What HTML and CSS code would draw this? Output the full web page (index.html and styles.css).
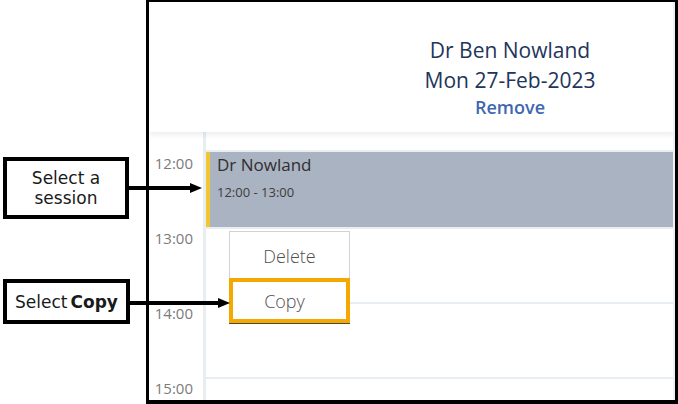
FILE: index.html
```html
<!DOCTYPE html>
<html lang="en">
<head>
  <meta charset="UTF-8" />
  <meta name="viewport" content="width=device-width, initial-scale=1.0" />
  <title>Session menu</title>
  <link rel="stylesheet" href="styles.css">
</head>
<body>
  <div class="stage">
    <div class="frame">
      <div class="head">
        <div class="head-gutter"></div>
        <div class="head-col">
          <div class="who">Dr Ben Nowland</div>
          <div class="who">Mon 27-Feb-2023</div>
          <a class="remove" href="#">Remove</a>
        </div>
      </div>

      <div class="grid">
        <div class="row row-lead">
          <div class="time"></div>
          <div class="day"></div>
        </div>
        <div class="row row-first">
          <div class="time">12:00</div>
          <div class="day">
            <div class="session">
              <div class="session-name">Dr Nowland</div>
              <div class="session-time">12:00 - 13:00</div>
            </div>
          </div>
        </div>
        <div class="row">
          <div class="time">13:00</div>
          <div class="day"></div>
        </div>
        <div class="row">
          <div class="time">14:00</div>
          <div class="day"></div>
        </div>
        <div class="row row-last">
          <div class="time">15:00</div>
          <div class="day"></div>
        </div>

        <div class="menu">
          <div class="menu-item">Delete</div>
          <div class="menu-item menu-item-hot">Copy</div>
        </div>
      </div>
    </div>

    <!-- annotations -->
    <div class="note note-session">Select a<br>session</div>
    <svg class="arrow arrow-session" width="74" height="16" viewBox="0 0 74 16">
      <line x1="0" y1="8" x2="62" y2="8" stroke="#000" stroke-width="4" />
      <polygon points="61,3 73,8 61,13" fill="#000" />
    </svg>

    <div class="note note-copy">Select <b>Copy</b></div>
    <svg class="arrow arrow-copy" width="101" height="16" viewBox="0 0 101 16">
      <line x1="0" y1="8" x2="89" y2="8" stroke="#000" stroke-width="4" />
      <polygon points="88,3 100,8 88,13" fill="#000" />
    </svg>
  </div>
</body>
</html>
```

FILE: styles.css
```css
body {
  margin: 0;
  background: #fff;
  font-family: 'Open Sans', sans-serif;
  overflow: hidden;
}

.stage {
  position: relative;
  width: 678px;
  height: 404px;
  padding-left: 146px;
  box-sizing: border-box;
}

.frame {
  height: 404px;
  box-sizing: border-box;
  border-style: solid;
  border-color: #000;
  border-width: 2px 3px 4px 3px;
  overflow: hidden;
  background: #fff;
  position: relative;
}

/* thin grey edge just inside the right border */
.frame::after {
  content: "";
  position: absolute;
  top: 0;
  right: 0;
  bottom: 0;
  width: 2px;
  background: #eef0f2;
  z-index: 2;
}

/* header */
.head {
  position: relative;
  z-index: 1;
  display: flex;
  height: 130px;
  background: #fff;
  box-shadow: 0 3px 5px rgba(0, 0, 0, 0.07);
}

.head-gutter {
  flex: 0 0 57px;
}

.head-col {
  flex: 0 0 608px;
  padding-top: 33px;
  text-align: center;
  color: #22355a;
}

.who {
  font-size: 21px;
  line-height: 30px;
}

.remove {
  display: block;
  font-size: 18px;
  line-height: 25px;
  font-weight: 600;
  color: #4066b3;
  text-decoration: none;
}

/* day grid */
.grid {
  position: relative;
}

.row {
  display: flex;
  height: 75px;
}

.row-lead {
  height: 18px;
}

.row-first {
  height: 77px;
}

.row-last {
  height: 40px;
}

.time {
  flex: 0 0 54px;
  box-sizing: border-box;
  padding: 2px 10px 0 0;
  text-align: right;
  font-size: 15px;
  line-height: 18px;
  color: #7b7b7b;
}

.row-first .time {
  padding-top: 4px;
}

.day {
  flex: 0 0 608px;
  border-left: 3px solid #e7edf1;
  border-top: 2px solid #e7edf1;
}

.row-lead .day {
  border-top: none;
}

.session {
  height: 100%;
  box-sizing: border-box;
  background: #aab3c2;
  border-left: 4px solid #f3c531;
  padding: 2px 0 0 7px;
}

.session-name {
  font-size: 17px;
  line-height: 22px;
  color: #2f2f2f;
}

.session-time {
  margin-top: 6px;
  font-size: 13px;
  line-height: 20px;
  color: #3c3c3c;
}

/* context menu */
.menu {
  position: absolute;
  left: 80px;
  top: 99px;
  width: 121px;
  background: #fff;
  border: 1px solid #d2d2d2;
  border-bottom: none;
  box-sizing: border-box;
  box-shadow: 0 1px 0 #4a4a4a;
}

.menu-item {
  height: 46px;
  padding-top: 13px;
  box-sizing: border-box;
  text-align: center;
  font-size: 18px;
  line-height: 22px;
  font-weight: 300;
  color: #505050;
}

.menu-item-hot {
  height: 45px;
  margin: 0 -1px;
  padding: 8px 10px 0 0;
  border: 4px solid #f5a800;
}

/* annotation callouts */
.note {
  position: absolute;
  left: 3px;
  display: flex;
  align-items: center;
  justify-content: center;
  box-sizing: border-box;
  border: 4px solid #000;
  background: #fff;
  text-align: center;
  font-family: 'DejaVu Sans', sans-serif;
  font-size: 17px;
  line-height: 20px;
  color: #1a1a1a;
}

.note-session {
  top: 157px;
  width: 126px;
  height: 62px;
}

.note-copy {
  top: 279px;
  width: 127px;
  height: 45px;
}

.note b {
  font-weight: bold;
  margin-left: 3px;
}

.arrow {
  position: absolute;
}

.arrow-session {
  left: 129px;
  top: 180px;
}

.arrow-copy {
  left: 130px;
  top: 295px;
}
```
